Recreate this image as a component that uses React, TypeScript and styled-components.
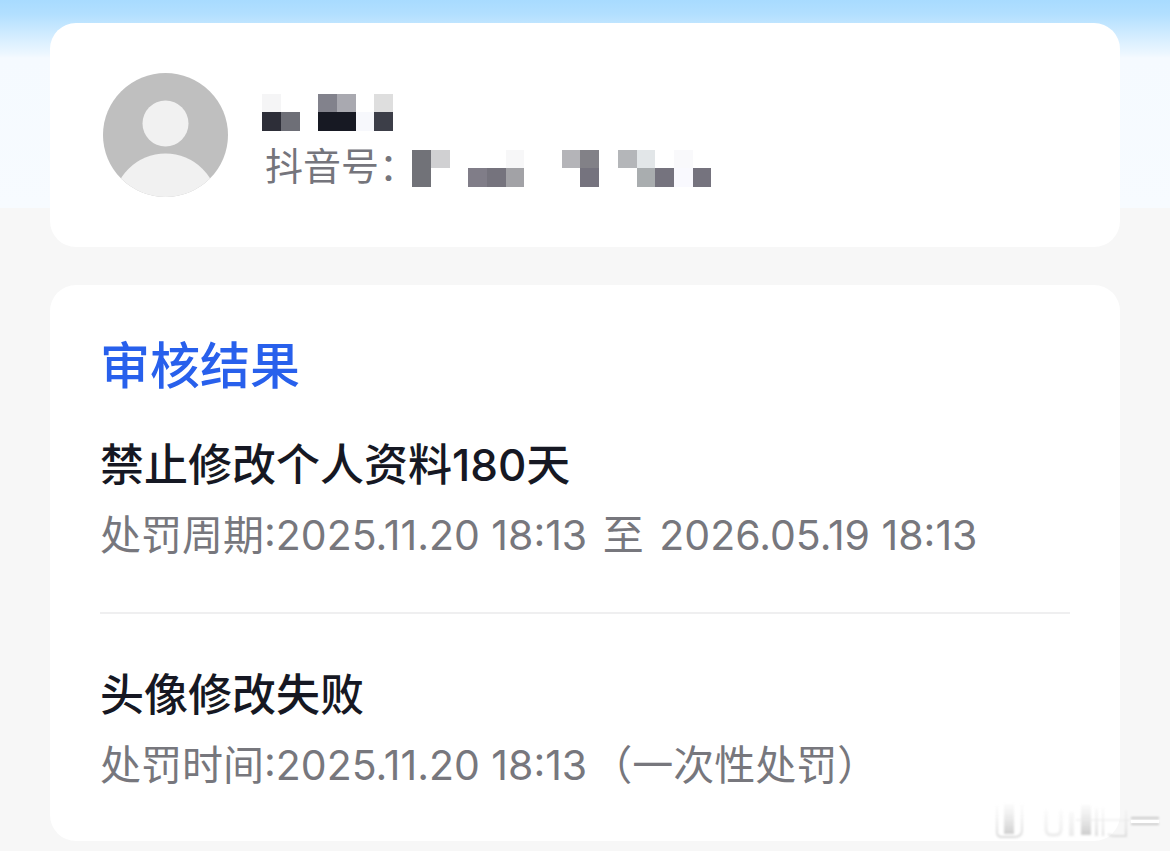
import React from 'react';
import styled, { createGlobalStyle } from 'styled-components';

const GlobalStyle = createGlobalStyle`
  *, *::before, *::after { box-sizing: border-box; }
  body {
    margin: 0;
    background: #f7f7f7;
    color: #161823;
    font-family: Inter, "Noto Sans CJK SC", sans-serif;
  }
  h1, h2, p { margin: 0; }
`;

const Page = styled.main`
  position: relative;
  display: flex;
  flex-direction: column;
  gap: 38px;
  padding: 23px 50px 10px;
  background:
    linear-gradient(#a8dbff 0, #b2dfff 14px, #cdeaff 32px, #edf7ff 54px, #f5faff 58px, #f7fbff 208px)
    top / 100% 208px no-repeat #f7f7f7;
`;

const Card = styled.section`
  background: #fff;
  border-radius: 26px;
`;

const ProfileCard = styled(Card)`
  display: flex;
  align-items: flex-start;
  gap: 34px;
  padding: 50px 53px;
`;

const Avatar = styled.svg`
  flex: none;
  display: block;
  width: 125px;
  height: 124px;
`;

const Identity = styled.div`
  display: flex;
  flex-direction: column;
  gap: 12px;
  padding-top: 21px;
`;

const AccountRow = styled.div`
  display: flex;
  align-items: flex-start;
  padding-left: 3px;
`;

const AccountLabel = styled.span`
  width: 147px;
  color: #75757c;
  font-size: 38px;
  line-height: 46px;
  white-space: nowrap;
`;

const AccountNumber = styled.span`
  padding-top: 7px;
`;

const MosaicImage = styled.svg`
  display: block;
  flex: none;
`;

const ResultCard = styled(Card)`
  padding: 51px 50px 52px;
`;

const Heading = styled.h1`
  margin-bottom: 41px;
  color: #2860ec;
  font-size: 50px;
  font-weight: 500;
  line-height: 60px;
`;

const Penalty = styled.article`
  display: flex;
  flex-direction: column;
  gap: 18px;

  & + & {
    margin-top: 53px;
    padding-top: 53px;
    border-top: 2px solid #efeff0;
  }
`;

const PenaltyTitle = styled.h2`
  font-size: 44px;
  font-weight: 500;
  line-height: 56px;
`;

const PenaltyTime = styled.p`
  color: #77777d;
  font-size: 41px;
  line-height: 48px;
`;

const Moment = styled.time`
  margin-right: 4px;
`;

const Joiner = styled.span`
  margin-right: 4px;
`;

const Watermark = styled.svg`
  position: absolute;
  right: 8px;
  bottom: 7px;
  width: 170px;
  height: 44px;
`;

type Cell = [column: number, row: number, color: string];

const CELL_X = [0, 19, 38, 56, 75, 94, 112, 131, 150, 168, 187, 206, 225, 243, 262, 281, 299];
const CELL_Y = [0, 18, 37];

const NAME_CELLS: Cell[] = [
  [0, 0, '#f5f5f6'], [0, 1, '#2d2e38'], [1, 1, '#6e6f77'],
  [3, 0, '#82828c'], [4, 0, '#a9a9b0'], [3, 1, '#171923'], [4, 1, '#171923'],
  [5, 1, '#f7f8fc'], [6, 0, '#dedede'], [6, 1, '#3c3e48'],
];

const NUMBER_CELLS: Cell[] = [
  [0, 0, '#717278'], [0, 1, '#717278'], [1, 0, '#d0d0d2'],
  [3, 1, '#807d88'], [4, 1, '#75737d'], [5, 0, '#f7f7f8'], [5, 1, '#a2a2a6'],
  [8, 0, '#b4b4b8'], [9, 0, '#828187'], [9, 1, '#75737e'],
  [11, 0, '#b4b6b9'], [12, 0, '#e2e6e8'], [12, 1, '#a9adaf'], [13, 1, '#75737e'],
  [14, 0, '#f9f9fb'], [14, 1, '#f9f9fe'], [15, 1, '#75737e'],
];

function Mosaic({ cells, columns, label }: { cells: Cell[]; columns: number; label: string }) {
  return (
    <MosaicImage width={CELL_X[columns]} height={37} role="img" aria-label={label} shapeRendering="crispEdges">
      {cells.map(([c, r, color]) => (
        <rect
          key={`${c}-${r}`}
          x={CELL_X[c]}
          y={CELL_Y[r]}
          width={CELL_X[c + 1] - CELL_X[c]}
          height={CELL_Y[r + 1] - CELL_Y[r]}
          fill={color}
        />
      ))}
    </MosaicImage>
  );
}

export default function App() {
  return (
    <>
      <GlobalStyle />
      <Page>
        <ProfileCard>
          <Avatar viewBox="0 0 125 124" role="img" aria-label="头像">
            <defs>
              <clipPath id="avatar-disc">
                <ellipse cx="62.5" cy="62" rx="62.5" ry="62" />
              </clipPath>
            </defs>
            <g clipPath="url(#avatar-disc)">
              <rect width="125" height="124" fill="#bfbfbf" />
              <circle cx="62.5" cy="50.5" r="23" fill="#f1f1f1" />
              <circle cx="62.5" cy="133" r="52.5" fill="#f1f1f1" />
            </g>
          </Avatar>
          <Identity>
            <Mosaic cells={NAME_CELLS} columns={7} label="昵称" />
            <AccountRow>
              <AccountLabel>抖音号：</AccountLabel>
              <AccountNumber>
                <Mosaic cells={NUMBER_CELLS} columns={16} label="抖音号" />
              </AccountNumber>
            </AccountRow>
          </Identity>
        </ProfileCard>

        <ResultCard>
          <Heading>审核结果</Heading>
          <Penalty>
            <PenaltyTitle>禁止修改个人资料180天</PenaltyTitle>
            <PenaltyTime>
              处罚周期:<Moment dateTime="2025-11-20T18:13">2025.11.20 18:13</Moment>
              {' '}<Joiner>至</Joiner>{' '}
              <Moment dateTime="2026-05-19T18:13">2026.05.19 18:13</Moment>
            </PenaltyTime>
          </Penalty>
          <Penalty>
            <PenaltyTitle>头像修改失败</PenaltyTitle>
            <PenaltyTime>
              处罚时间:<Moment dateTime="2025-11-20T18:13">2025.11.20 18:13</Moment>（一次性处罚）
            </PenaltyTime>
          </Penalty>
        </ResultCard>

        <Watermark viewBox="0 0 170 44" aria-hidden="true">
          <defs>
            <linearGradient id="wm-fade" gradientUnits="userSpaceOnUse" x1="0" y1="4" x2="0" y2="37">
              <stop offset="0" stopColor="#d8d8d8" stopOpacity="0.1" />
              <stop offset="1" stopColor="#c4c4c4" stopOpacity="0.9" />
            </linearGradient>
            <filter id="wm-soft" x="-10%" y="-10%" width="120%" height="120%">
              <feGaussianBlur stdDeviation="1" />
            </filter>
          </defs>
          <g filter="url(#wm-soft)">
            <rect x="12" y="4" width="10" height="30" fill="url(#wm-fade)" />
            <path d="M5 6V32Q5 37 10 37H22Q30 37 30 30V4" fill="none" stroke="url(#wm-fade)" strokeWidth="2" opacity="0.7" />
            <path d="M54 10V29Q54 35 60 35H63Q69 35 69 29V10" fill="none" stroke="url(#wm-fade)" strokeWidth="3" opacity="0.4" />
            <rect x="77" y="12" width="5" height="24" fill="url(#wm-fade)" opacity="0.4" />
            <rect x="89" y="5" width="10" height="30" fill="url(#wm-fade)" />
            <rect x="103" y="8" width="3" height="28" fill="url(#wm-fade)" opacity="0.6" />
            <rect x="110" y="8" width="2" height="28" fill="url(#wm-fade)" opacity="0.6" />
            <path d="M116 34Q119 36 122 36H134V10" fill="none" stroke="url(#wm-fade)" strokeWidth="2" opacity="0.6" />
            <path d="M84 20H138" stroke="#e8e8e8" strokeWidth="1" />
            <path d="M139 18H167M139 24H167" stroke="#c8c8c8" strokeWidth="2" />
          </g>
          <rect x="139" y="20" width="28" height="3" fill="#fff" />
        </Watermark>
      </Page>
    </>
  );
}
